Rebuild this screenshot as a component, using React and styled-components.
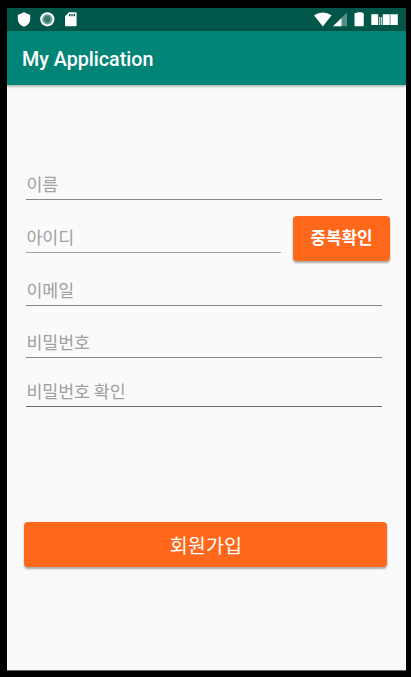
import React from "react";
import styled, { createGlobalStyle } from "styled-components";

const Global = createGlobalStyle`
  * { box-sizing: border-box; }
  body {
    margin: 0;
    background: #000;
    font-family: Roboto, "Noto Sans CJK KR", sans-serif;
  }
`;

const Device = styled.div`
  width: 411px;
  height: 677px;
  padding: 8px 5px 6px 7px;
  background: #000;
  overflow: hidden;
`;

const Screen = styled.div`
  display: flex;
  flex-direction: column;
  height: 663px;
  background: #fafafa;
  border-bottom: 1px solid #666;
`;

const StatusBar = styled.header`
  display: flex;
  flex: none;
  justify-content: space-between;
  height: 23px;
  background: #005749;
`;

const StatusIcons = styled.svg`
  display: block;
  flex: none;
  fill: #fff;
`;

const AppBar = styled.div`
  display: flex;
  flex: none;
  align-items: center;
  height: 54px;
  padding: 3px 0 0 15px;
  background: #028577;
  box-shadow: 0 1px 3px rgba(0, 0, 0, 0.42);
`;

const Title = styled.h1`
  margin: 0;
  color: #fff;
  font-size: 19.7px;
  font-weight: 500;
  line-height: 24px;
  white-space: nowrap;
`;

const Form = styled.form`
  display: flex;
  flex-direction: column;
  padding: 83px 16px 0 19px;
`;

const Row = styled.div`
  display: flex;
  flex: none;
  align-items: flex-start;
  gap: 12px;
  height: ${(p) => p.$height}px;
`;

const Field = styled.div`
  flex: none;
  width: ${(p) => p.$width || 356}px;
  height: 32px;
  margin-top: ${(p) => p.$top || 0}px;
  padding-left: 0.4px;
  border-bottom: 1px solid ${(p) => p.$line || "#858585"};
  color: #a0a0a0;
  font-family: "Noto Sans CJK KR", sans-serif;
  font-size: 17.3px;
  font-weight: 400;
  line-height: 32px;
  white-space: nowrap;
`;

const Button = styled.button`
  flex: none;
  width: ${(p) => p.$width}px;
  height: 45px;
  padding: 0 0 ${(p) => p.$lift}px;
  border: 0;
  border-radius: 4px;
  background: #ff671b;
  box-shadow: 0 1.5px 2px rgba(0, 0, 0, 0.32);
  color: #fff;
  font-family: "Noto Sans CJK KR", sans-serif;
  font-size: ${(p) => p.$size}px;
  font-weight: ${(p) => p.$weight};
  line-height: 40px;
  white-space: nowrap;
`;

const SubmitButton = styled(Button)`
  margin: -0.6px 0 0 -1.6px;
`;

function NotificationIcons() {
  return (
    <StatusIcons width="80" height="23" viewBox="7 8 80 23">
      <path d="M24 12.2L30.2 15v4c0 3.7-2.6 6.6-6.2 7.7-3.6-1.1-6.2-4-6.2-7.7v-4z" />
      <circle cx="47.3" cy="19.3" r="7.1" />
      <circle cx="47.3" cy="19.3" r="5.1" fill="#6da097" />
      <circle cx="47.3" cy="19.3" r="3.2" fill="#39766b" />
      <path d="M69 12.3h6.6q1 0 1 1v12q0 1-1 1H66q-1 0-1-1v-9z" />
      <path d="M69 14h1.4v2.2H69zM71.3 14h1.4v2.2h-1.4zM73.6 14H75v2.2h-1.4z" fill="#005749" />
    </StatusIcons>
  );
}

function SystemIcons() {
  return (
    <StatusIcons width="96" height="23" viewBox="310 8 96 23">
      <path d="M314 15.2q8.8-5.4 17.6 0L322.8 26.4z" />
      <path d="M347 12.4v13.9h-14z" fillOpacity=".33" />
      <path d="M341.5 17.9v8.4H333z" />
      <path d="M356.8 12.2h5.5v.8h.8q.7 0 .7.7v11.9q0 .7-.7.7h-7.9q-.7 0-.7-.7V13.7q0-.7.7-.7h1.6z" />
      <path d="M371.3 14.2h6.9V25h-6.9z" />
      <path d="M379 17h1.2v8H379zM380.8 17h1.4v8h-1.4z" fillOpacity=".75" />
      <path d="M382.8 14.2h7V25h-7zM390.3 14.2h7.5V25h-7.5z" />
      <path d="M390 14.2h.5V25h-.5z" fill="#8fb3ad" />
    </StatusIcons>
  );
}

export default function App() {
  return (
    <>
      <Global />
      <Device>
        <Screen>
          <StatusBar>
            <NotificationIcons />
            <SystemIcons />
          </StatusBar>
          <AppBar>
            <Title>My Application</Title>
          </AppBar>
          <Form>
            <Row $height={48}>
              <Field>이름</Field>
            </Row>
            <Row $height={58}>
              <Field $width={255} $top={5} $line="#a2a2a2">아이디</Field>
              <Button type="button" $width={97} $size={16.9} $weight={700} $lift={3}>
                중복확인
              </Button>
            </Row>
            <Row $height={52}>
              <Field>이메일</Field>
            </Row>
            <Row $height={49}>
              <Field>비밀번호</Field>
            </Row>
            <Row $height={148}>
              <Field $line="#6e6e6e">비밀번호 확인</Field>
            </Row>
            <SubmitButton type="button" $width={363} $size={19.6} $weight={400} $lift={0}>
              회원가입
            </SubmitButton>
          </Form>
        </Screen>
      </Device>
    </>
  );
}
